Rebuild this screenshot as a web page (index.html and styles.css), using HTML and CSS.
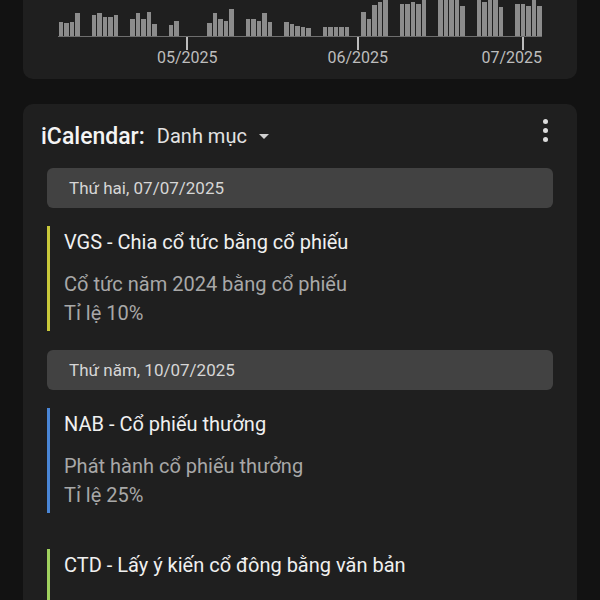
FILE: index.html
```html
<!DOCTYPE html>
<html lang="vi">
<head>
  <meta charset="UTF-8">
  <meta name="viewport" content="width=device-width, initial-scale=1.0">
  <title>iCalendar</title>
  <link rel="stylesheet" href="styles.css">
</head>
<body>
  <div class="page">
    <section class="card chart-card">
      <div class="bars"></div>
      <div class="axis"></div>
    </section>

    <section class="card calendar">
      <div class="cal-head">
        <h2 class="cal-title">iCalendar:</h2>
        <button class="cal-filter">Danh mục <span class="caret"></span></button>
        <button class="more" aria-label="Thêm">
          <span></span><span></span><span></span>
        </button>
      </div>

      <div class="day">Thứ hai, 07/07/2025</div>
      <div class="event event-yellow">
        <div class="event-title">VGS - Chia cổ tức bằng cổ phiếu</div>
        <div class="event-desc">
          Cổ tức năm 2024 bằng cổ phiếu<br>
          Tỉ lệ 10%
        </div>
      </div>

      <div class="day">Thứ năm, 10/07/2025</div>
      <div class="event event-blue">
        <div class="event-title">NAB - Cổ phiếu thưởng</div>
        <div class="event-desc">
          Phát hành cổ phiếu thưởng<br>
          Tỉ lệ 25%
        </div>
      </div>
      <div class="event event-green">
        <div class="event-title">CTD - Lấy ý kiến cổ đông bằng văn bản</div>
      </div>
    </section>
  </div>

  <script>
    // one slot per calendar day from 08/04/2025, 0 = no trading
    const volumes = [
      14, 13, 14, 23, 0, 0,
      21, 23, 19, 19, 21, 0, 0,
      17, 23, 17, 24, 12, 0, 0,
      11, 15, 0, 0, 0, 0, 0,
      13, 23, 17, 15, 27, 0, 0,
      17, 17, 15, 23, 14, 0, 0,
      14, 12, 10, 9, 8, 0, 0,
      9, 9, 9, 9, 9, 0, 0,
      24, 17, 31, 34, 40, 0, 0,
      32, 32, 34, 32, 42, 0, 0,
      44, 46, 40, 45, 30, 0, 0,
      42, 34, 48, 38, 29, 0, 0,
      32, 32, 30, 38, 30
    ];
    const ticks = [
      { col: 24, label: '05/2025' },
      { col: 55, label: '06/2025' },
      { col: 85, label: '07/2025', end: true }
    ];

    const bars = document.querySelector('.bars');
    const axis = document.querySelector('.axis');
    bars.style.gridTemplateColumns = `repeat(${volumes.length}, 1fr)`;
    axis.style.gridTemplateColumns = `repeat(${volumes.length}, 1fr)`;

    volumes.forEach(v => {
      const bar = document.createElement('div');
      bar.className = 'bar';
      bar.style.height = v + 'px';
      bars.appendChild(bar);
    });

    ticks.forEach(t => {
      const tick = document.createElement('div');
      tick.className = t.end ? 'tick tick-end' : 'tick';
      tick.style.gridColumn = t.col;
      tick.innerHTML = `<span class="tick-label">${t.label}</span>`;
      axis.appendChild(tick);
    });
  </script>
</body>
</html>
```

FILE: styles.css
```css
:root {
  --bg: #121212;
  --card: #1f1f1f;
  --day: #424242;
  --text: #f0f0f0;
  --muted: #a8a8a8;
}

* {
  margin: 0;
  padding: 0;
  box-sizing: border-box;
}

body {
  font-family: Roboto, "Noto Sans", sans-serif;
  background: var(--bg);
  color: var(--text);
  overflow: hidden;
}

.page {
  padding: 0 23px;
  display: flex;
  flex-direction: column;
  gap: 25px;
}

.card {
  background: var(--card);
  border-radius: 10px;
}

/* chart */
.chart-card {
  margin-top: -50px;
  padding: 16px 35px 13px;
}

.bars {
  display: grid;
  align-items: end;
  height: 71px;
  border-bottom: 1px solid #6e6e6e;
}

.bar {
  margin: 0 0.5px;
  background: #8c8c8c;
}

.axis {
  display: grid;
  height: 29px;
}

.tick {
  grid-row: 1;
  justify-self: center;
  width: 0;
  display: flex;
  flex-direction: column;
  align-items: center;
}

.tick::before {
  content: '';
  width: 2px;
  height: 13px;
  background: #bdbdbd;
}

.tick-label {
  font-size: 16px;
  line-height: 16px;
  color: #bdbdbd;
  white-space: nowrap;
}

/* last label is kept inside the chart */
.tick-end .tick-label {
  transform: translateX(-11px);
}

/* calendar */
.calendar {
  padding: 0 24px 40px;
}

.cal-head {
  height: 64px;
  display: flex;
  align-items: center;
  margin-left: -6px;
}

.cal-title {
  font-size: 23px;
  font-weight: 500;
  color: #f4f4f4;
}

.cal-filter {
  margin-left: 12px;
  display: flex;
  align-items: center;
  gap: 12px;
  background: none;
  border: none;
  font: inherit;
  font-size: 20px;
  color: #e2e2e2;
}

.caret {
  width: 0;
  height: 0;
  border-left: 5px solid transparent;
  border-right: 5px solid transparent;
  border-top: 5px solid #cfcfcf;
}

.more {
  margin-left: auto;
  margin-right: 5px;
  display: flex;
  flex-direction: column;
  gap: 4px;
  background: none;
  border: none;
  padding-bottom: 11px;
}

.more span {
  width: 5px;
  height: 5px;
  border-radius: 50%;
  background: #dcdcdc;
}

.day {
  height: 40px;
  display: flex;
  align-items: center;
  padding-left: 22px;
  border-radius: 6px;
  background: var(--day);
  font-size: 17px;
  color: #d6d6d6;
}

.event {
  margin: 18px 0 19px;
  padding: 0 0 3px 14px;
  border-left: 3px solid;
}

.event + .event {
  margin-top: 36px;
}

.event-yellow { border-color: #c8c83a; }
.event-blue { border-color: #4a86d6; }
.event-green { border-color: #9fd05e; min-height: 80px; }

.event-title {
  font-size: 20px;
  line-height: 32px;
  color: var(--text);
}

.event-desc {
  margin-top: 12px;
  font-size: 20px;
  line-height: 29px;
  color: var(--muted);
}
```
